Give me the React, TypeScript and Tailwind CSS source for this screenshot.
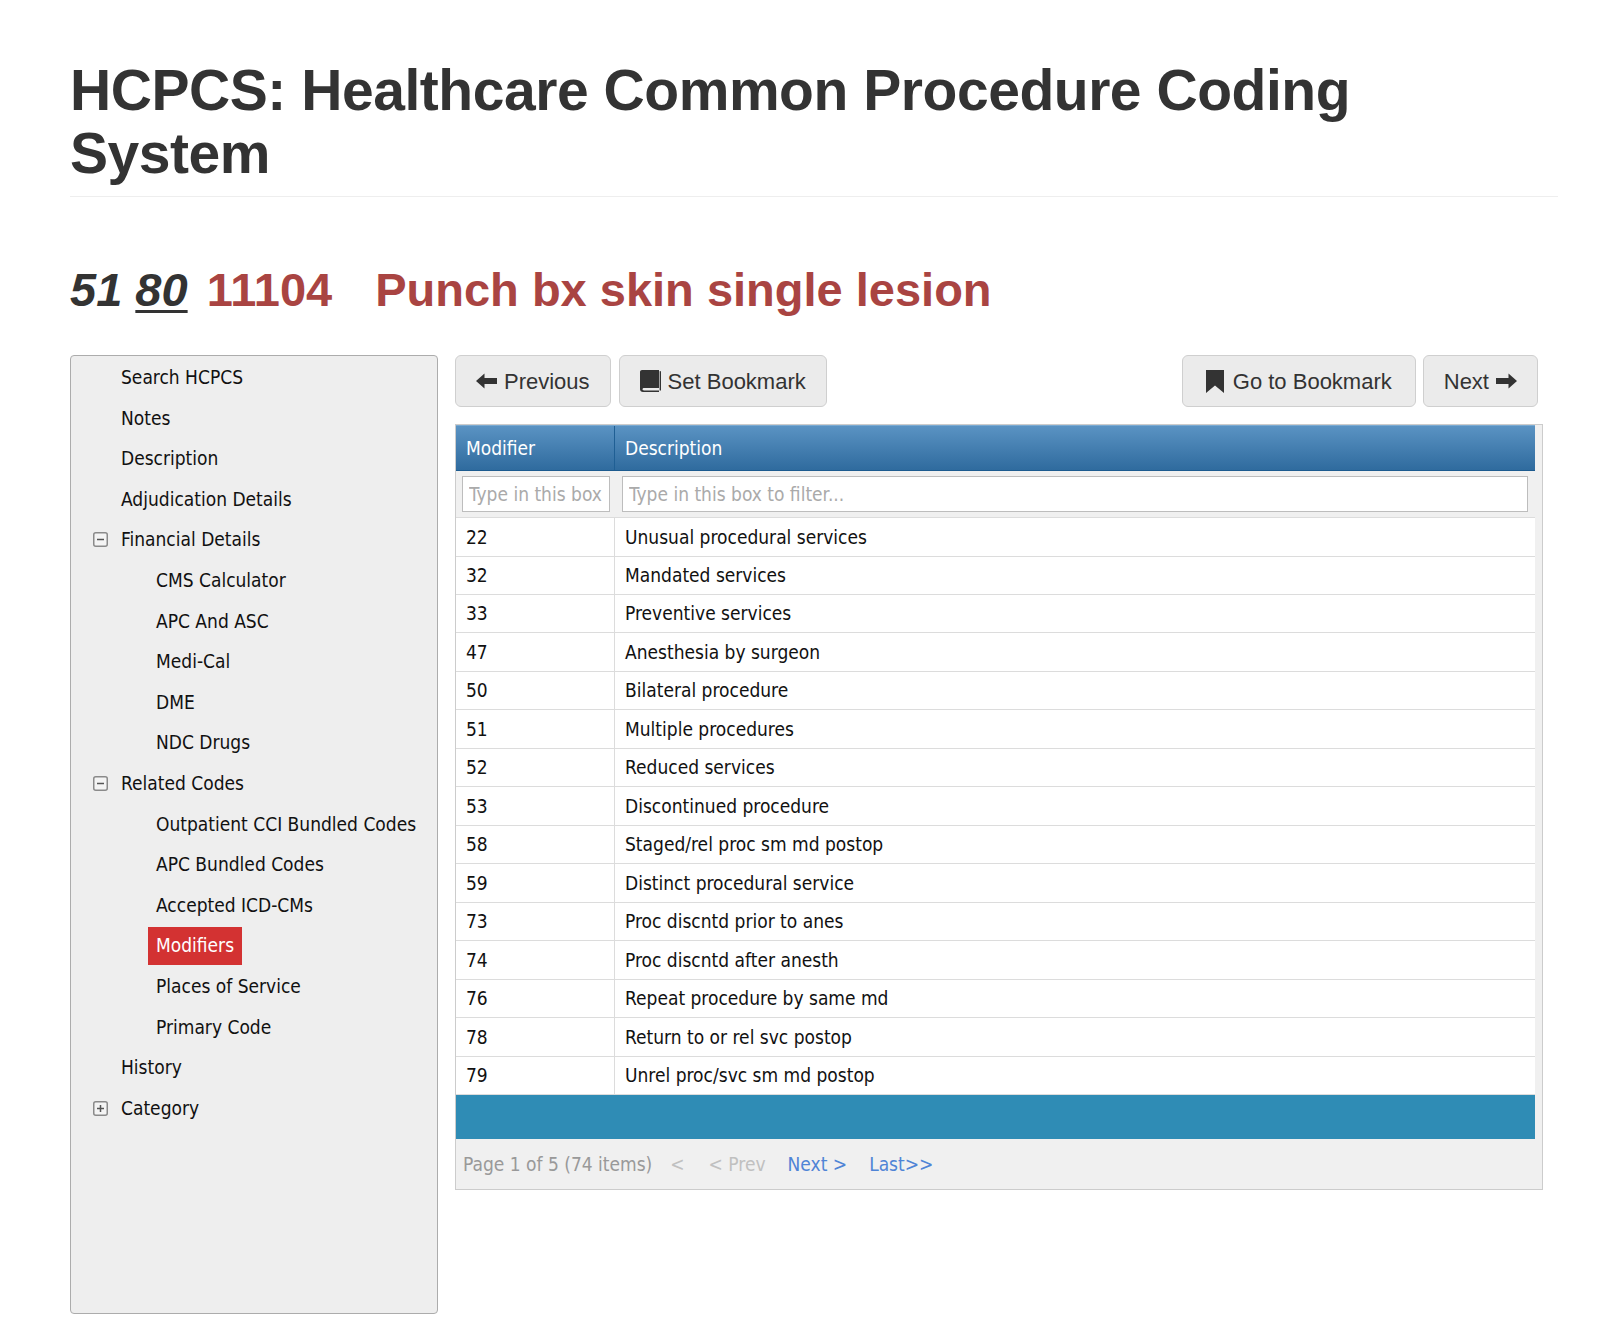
const SANS = "font-['Liberation_Sans',Arial,Helvetica,sans-serif]";
const TAHOMA = "font-['DejaVu_Sans_Condensed','DejaVu_Sans',Tahoma,Verdana,sans-serif]";

type NavItem = {
  label: string;
  level: 0 | 1;
  toggle?: "minus" | "plus";
  active?: boolean;
};

const NAV: NavItem[] = [
  { label: "Search HCPCS", level: 0 },
  { label: "Notes", level: 0 },
  { label: "Description", level: 0 },
  { label: "Adjudication Details", level: 0 },
  { label: "Financial Details", level: 0, toggle: "minus" },
  { label: "CMS Calculator", level: 1 },
  { label: "APC And ASC", level: 1 },
  { label: "Medi-Cal", level: 1 },
  { label: "DME", level: 1 },
  { label: "NDC Drugs", level: 1 },
  { label: "Related Codes", level: 0, toggle: "minus" },
  { label: "Outpatient CCI Bundled Codes", level: 1 },
  { label: "APC Bundled Codes", level: 1 },
  { label: "Accepted ICD-CMs", level: 1 },
  { label: "Modifiers", level: 1, active: true },
  { label: "Places of Service", level: 1 },
  { label: "Primary Code", level: 1 },
  { label: "History", level: 0 },
  { label: "Category", level: 0, toggle: "plus" },
];

const ROWS = [
  ["22", "Unusual procedural services"],
  ["32", "Mandated services"],
  ["33", "Preventive services"],
  ["47", "Anesthesia by surgeon"],
  ["50", "Bilateral procedure"],
  ["51", "Multiple procedures"],
  ["52", "Reduced services"],
  ["53", "Discontinued procedure"],
  ["58", "Staged/rel proc sm md postop"],
  ["59", "Distinct procedural service"],
  ["73", "Proc discntd prior to anes"],
  ["74", "Proc discntd after anesth"],
  ["76", "Repeat procedure by same md"],
  ["78", "Return to or rel svc postop"],
  ["79", "Unrel proc/svc sm md postop"],
];

function ToggleBox({ kind }: { kind: "minus" | "plus" }) {
  return (
    <svg width="15" height="15" viewBox="0 0 15 15" className="shrink-0">
      <rect x="0.75" y="0.75" width="13.5" height="13.5" rx="2" fill="#f4f4f4" stroke="#8a8a8a" strokeWidth="1.5" />
      <rect x="4" y="6.75" width="7" height="1.5" fill="#555" />
      {kind === "plus" && <rect x="6.75" y="4" width="1.5" height="7" fill="#555" />}
    </svg>
  );
}

function ArrowLeft() {
  return (
    <svg width="21" height="16" viewBox="0 0 21 16" fill="#333">
      <path d="M0 8 L8.5 0.5 V5 H21 V11 H8.5 V15.5 Z" />
    </svg>
  );
}

function ArrowRight() {
  return (
    <svg width="21" height="16" viewBox="0 0 21 16" fill="#333">
      <path d="M21 8 L12.5 0.5 V5 H0 V11 H12.5 V15.5 Z" />
    </svg>
  );
}

function BookIcon() {
  return (
    <svg width="21" height="22" viewBox="0 0 21 22" fill="#333">
      <path d="M2 0 H19 V18 H4 C3 18 2.5 18.6 2.5 19.3 C2.5 20 3 20.5 4 20.5 H19 V22 H3 C1.3 22 0 20.8 0 19.2 V2 C0 0.9 0.9 0 2 0 Z" />
      <rect x="19.6" y="1.2" width="1.4" height="19.3" />
    </svg>
  );
}

function BookmarkIcon() {
  return (
    <svg width="18" height="23" viewBox="0 0 18 23" fill="#333">
      <path d="M0 0 H18 V23 L9 15.5 L0 23 Z" />
    </svg>
  );
}

function NavButton({ children, wide }: { children: React.ReactNode; wide?: boolean }) {
  return (
    <button
      type="button"
      className={`${SANS} h-[52px] flex items-center rounded-[6px] border border-[#cfcfcf] bg-[#ebebeb] text-[22px] text-[#333] ${
        wide ? "gap-[9px] px-[23px]" : "gap-[7px] px-[20px]"
      }`}
    >
      {children}
    </button>
  );
}

export default function App() {
  return (
    <div className="min-h-[1342px] bg-white pl-[70px] pr-[62px] pt-[59px] pb-[28px]">
      <h1 className={`${SANS} font-bold text-[57px] leading-[1.1] tracking-[-0.45px] text-[#333] pb-[12px] border-b border-[#eee]`}>
        HCPCS: Healthcare Common Procedure Coding System
      </h1>

      <h2 className={`${SANS} mt-[67px] font-bold text-[47px] leading-[1.1] text-[#333]`}>
        <i>51</i> <i className="underline decoration-[3px] underline-offset-[4px]">80</i>{" "}
        <span className="ml-[6px] text-[#a94442]">11104</span>
        <span className="ml-[43px] text-[#a94442]">Punch bx skin single lesion</span>
      </h2>

      <div className="mt-[39px] flex gap-[17px]">
        <aside className={`${TAHOMA} w-[368px] h-[959px] shrink-0 bg-[#eeeeee] border border-[#acacac] rounded-[4px] pt-[1px] text-[19px] text-[#111]`}>
          {NAV.map((item) => (
            <div key={item.label} className="h-[40.6px] flex items-center">
              {item.level === 0 ? (
                <div className="flex items-center">
                  <div className="w-[42px] pl-[22px] flex items-center">
                    {item.toggle && <ToggleBox kind={item.toggle} />}
                  </div>
                  <span className="px-[8px]">{item.label}</span>
                </div>
              ) : (
                <span
                  className={`ml-[77px] px-[8px] h-[38px] flex items-center ${
                    item.active ? "bg-[#d33232] text-white" : ""
                  }`}
                >
                  {item.label}
                </span>
              )}
            </div>
          ))}
        </aside>

        <main className="flex-1 min-w-0 pr-[15px]">
          <div className="flex justify-between pr-[5px]">
            <div className="flex gap-[8px]">
              <NavButton>
                <ArrowLeft />
                <span>Previous</span>
              </NavButton>
              <NavButton>
                <BookIcon />
                <span>Set Bookmark</span>
              </NavButton>
            </div>
            <div className="flex gap-[7px]">
              <NavButton wide>
                <BookmarkIcon />
                <span>Go to Bookmark</span>
              </NavButton>
              <NavButton>
                <span>Next</span>
                <ArrowRight />
              </NavButton>
            </div>
          </div>

          <div className={`${TAHOMA} mt-[17px] border border-[#cccccc] bg-[#f0f0f0] text-[19px]`}>
            <div className="mr-[7px]">
              <div className="h-[46px] flex bg-gradient-to-b from-[#5a93c3] to-[#2f6b9e] border-t border-[#7aaad2] border-b border-b-[#1d5b8f] text-white">
                <div className="w-[159px] border-r border-[#1f5f94] pl-[10px] flex items-center">Modifier</div>
                <div className="flex-1 pl-[10px] flex items-center">Description</div>
              </div>

              <div className="h-[46px] flex items-center">
                <div className="w-[159px] pl-[6px] pr-[5px]">
                  <input
                    placeholder="Type in this box"
                    className="w-full h-[36px] border border-[#bdbdbd] bg-white px-[6px] placeholder:text-[#aaa] outline-none"
                  />
                </div>
                <div className="flex-1 pl-[7px] pr-[7px]">
                  <input
                    placeholder="Type in this box to filter..."
                    className="w-full h-[36px] border border-[#bdbdbd] bg-white px-[6px] placeholder:text-[#aaa] outline-none"
                  />
                </div>
              </div>

              <div className="bg-white border-t border-[#dcdcdc] text-[#111]">
                {ROWS.map(([code, desc]) => (
                  <div key={code} className="h-[38.47px] flex border-b border-[#dcdcdc]">
                    <div className="w-[159px] border-r border-[#dcdcdc] pl-[10px] flex items-center">{code}</div>
                    <div className="flex-1 pl-[10px] flex items-center">{desc}</div>
                  </div>
                ))}
              </div>

              <div className="h-[44px] bg-[#2f8cb5]" />
            </div>

            <div className="h-[50px] flex items-center pl-[7px] text-[#999]">
              <span>Page 1 of 5 (74 items)</span>
              <span className="ml-[18px] text-[#c0c0c0]">&lt;</span>
              <span className="ml-[24px] text-[#c0c0c0]">&lt; Prev</span>
              <span className="ml-[22px] text-[#4f84d6]">Next &gt;</span>
              <span className="ml-[22px] text-[#4f84d6]">Last&gt;&gt;</span>
            </div>
          </div>
        </main>
      </div>
    </div>
  );
}
